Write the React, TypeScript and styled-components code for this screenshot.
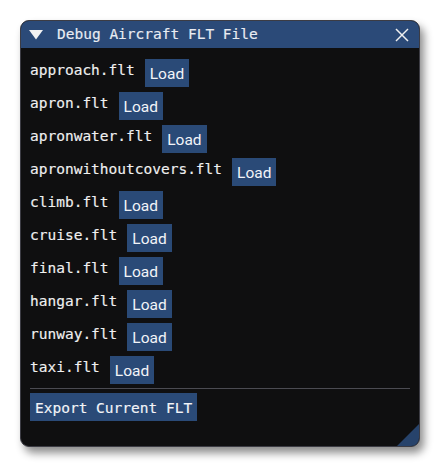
import styled, { createGlobalStyle } from "styled-components";

// Debug window listing aircraft flight files, each with a load action

const files = [
  "approach.flt",
  "apron.flt",
  "apronwater.flt",
  "apronwithoutcovers.flt",
  "climb.flt",
  "cruise.flt",
  "final.flt",
  "hangar.flt",
  "runway.flt",
  "taxi.flt",
];

export default function App() {
  return (
    <>
      <GlobalStyle />
      <Page>
        <Window>
          <TitleBar>
            <Collapse viewBox="0 0 14 10">
              <polygon points="0,0 14,0 7,9.5" fill="#f2f2f2" />
            </Collapse>
            <Title>Debug Aircraft FLT File</Title>
            <Close viewBox="0 0 14 14">
              <line x1="1" y1="1" x2="13" y2="13" />
              <line x1="13" y1="1" x2="1" y2="13" />
            </Close>
          </TitleBar>

          <Body>
            <List>
              {files.map((name) => (
                <Row key={name}>
                  <FileName>{name}</FileName>
                  <LoadButton>Load</LoadButton>
                </Row>
              ))}
            </List>
            <Separator />
            <ExportButton>Export Current FLT</ExportButton>
          </Body>

          {/* resize grip in the lower right corner */}
          <Grip viewBox="0 0 22 22">
            <polygon points="22,0 22,22 0,22" fill="#27436b" />
          </Grip>
        </Window>
      </Page>
    </>
  );
}

const GlobalStyle = createGlobalStyle`
  html, body {
    margin: 0;
    background: #ffffff;
  }
`;

const Page = styled.main`
  padding: 20px 0 0 20px;
  width: 440px;
  height: 468px;
  box-sizing: border-box;
`;

const Window = styled.section`
  position: relative;
  width: 400px;
  height: 427px;
  box-sizing: border-box;
  display: flex;
  flex-direction: column;
  background: #0f0f10;
  border: 1px solid #3c3c44;
  border-radius: 9px;
  overflow: hidden;
  box-shadow: 4px 6px 8px rgba(0, 0, 0, 0.45);
`;

const TitleBar = styled.header`
  height: 27px;
  flex: none;
  display: flex;
  align-items: center;
  padding: 0 8px 0 8px;
  background: #2b4a78;
  color: #e9ecf2;
`;

const Collapse = styled.svg`
  width: 14px;
  height: 10px;
  margin-right: 14px;
  margin-top: 1px;
`;

const Title = styled.span`
  flex: 1;
  font-family: "DejaVu Sans Mono", monospace;
  font-size: 14.5px;
  line-height: 17px;
  -webkit-text-stroke: 0.15px currentColor;
`;

const Close = styled.svg`
  width: 14px;
  height: 14px;
  margin-right: 2px;
  stroke: #f0f0f0;
  stroke-width: 1.5;
`;

const Body = styled.div`
  flex: 1;
  display: flex;
  flex-direction: column;
  align-items: flex-start;
  padding: 11px 9px 0 9px;
`;

const List = styled.div`
  display: flex;
  flex-direction: column;
  gap: 5px;
`;

const Row = styled.div`
  display: flex;
  align-items: flex-start;
  gap: 10px;
`;

const FileName = styled.span`
  font-family: "DejaVu Sans Mono", monospace;
  font-size: 14.5px;
  line-height: 17px;
  padding-top: 3px;
  color: #f0f0f0;
  -webkit-text-stroke: 0.15px currentColor;
`;

const LoadButton = styled.button`
  border: none;
  margin: 0;
  padding: 6px 5px 4px 5px;
  background: #2a4a77;
  color: #f2f4f8;
  font-family: Roboto, sans-serif;
  font-size: 15.5px;
  line-height: 18px;
`;

const Separator = styled.hr`
  align-self: stretch;
  margin: 4px 0 4px 0;
  border: none;
  height: 1px;
  background: #4b4b52;
`;

const ExportButton = styled.button`
  border: none;
  margin: 0;
  padding: 7px 5px 4px 5px;
  background: #2a4a77;
  color: #f2f4f8;
  font-family: "DejaVu Sans Mono", monospace;
  font-size: 14.5px;
  line-height: 17px;
  -webkit-text-stroke: 0.15px currentColor;
`;

const Grip = styled.svg`
  position: absolute;
  right: 0;
  bottom: 0;
  width: 22px;
  height: 22px;
`;
